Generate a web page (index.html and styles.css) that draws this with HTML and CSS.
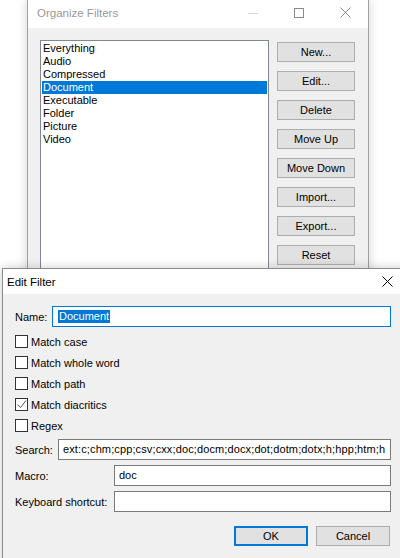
FILE: index.html
```html
<!DOCTYPE html>
<html lang="en">
<head>
    <meta charset="UTF-8">
    <title>Organize Filters</title>
    <link rel="stylesheet" href="styles.css">
</head>
<body>
<div class="desktop">

    <!-- Back window: Organize Filters (inactive) -->
    <div class="window organize">
        <div class="titlebar">
            <span class="title inactive">Organize Filters</span>
            <div class="caption">
                <span class="cap-btn"><svg width="10" height="10" viewBox="0 0 10 10"><path d="M0 5.5h10" stroke="#d8d8d8" stroke-width="1"/></svg></span>
                <span class="cap-btn"><svg width="10" height="10" viewBox="0 0 10 10"><rect x="0.5" y="0.5" width="9" height="9" fill="none" stroke="#8a8a8a" stroke-width="1"/></svg></span>
                <span class="cap-btn"><svg width="11" height="11" viewBox="0 0 11 11"><path d="M0.5 0.5l10 10M10.5 0.5l-10 10" stroke="#8a8a8a" stroke-width="1"/></svg></span>
            </div>
        </div>
        <div class="organize-body">
            <ul class="filter-list">
                <li>Everything</li>
                <li>Audio</li>
                <li>Compressed</li>
                <li class="selected">Document</li>
                <li>Executable</li>
                <li>Folder</li>
                <li>Picture</li>
                <li>Video</li>
            </ul>
            <div class="side-buttons">
                <div class="btn">New...</div>
                <div class="btn">Edit...</div>
                <div class="btn">Delete</div>
                <div class="btn">Move Up</div>
                <div class="btn">Move Down</div>
                <div class="btn">Import...</div>
                <div class="btn">Export...</div>
                <div class="btn">Reset</div>
            </div>
        </div>
    </div>

    <!-- Front window: Edit Filter (active) -->
    <div class="window edit-filter">
        <div class="titlebar">
            <span class="title">Edit Filter</span>
            <div class="caption">
                <span class="cap-btn"><svg width="11" height="11" viewBox="0 0 11 11"><path d="M0.5 0.5l10 10M10.5 0.5l-10 10" stroke="#000" stroke-width="1"/></svg></span>
            </div>
        </div>
        <div class="edit-body">
            <div class="field-row">
                <span class="label name-label">Name:</span>
                <div class="textbox focused"><span class="sel-text">Document</span></div>
            </div>

            <div class="checks">
                <div class="check-row"><span class="checkbox"></span><span>Match case</span></div>
                <div class="check-row"><span class="checkbox"></span><span>Match whole word</span></div>
                <div class="check-row"><span class="checkbox"></span><span>Match path</span></div>
                <div class="check-row">
                    <span class="checkbox"><svg width="11" height="11" viewBox="0 0 11 11"><path d="M1.5 5.5l3 3 5.5-7" fill="none" stroke="#555" stroke-width="1"/></svg></span>
                    <span>Match diacritics</span>
                </div>
                <div class="check-row"><span class="checkbox"></span><span>Regex</span></div>
            </div>

            <div class="field-row search-row">
                <span class="label search-label">Search:</span>
                <div class="textbox search-box">ext:c;chm;cpp;csv;cxx;doc;docm;docx;dot;dotm;dotx;h;hpp;htm;h</div>
            </div>
            <div class="field-row">
                <span class="label wide-label">Macro:</span>
                <div class="textbox">doc</div>
            </div>
            <div class="field-row">
                <span class="label wide-label">Keyboard shortcut:</span>
                <div class="textbox"></div>
            </div>

            <div class="dialog-buttons">
                <div class="btn default">OK</div>
                <div class="btn">Cancel</div>
            </div>
        </div>
    </div>

</div>
</body>
</html>
```
FILE: styles.css
```css
/* General */
body {
    margin: 0;
    background-color: #fff;
    font-family: 'Liberation Sans', Arial, sans-serif;
    font-size: 11px;
    color: #000;
}

.desktop {
    position: relative;
    width: 400px;
    height: 558px;
    overflow: hidden;
}

/* Windows sit on a free canvas */
.window {
    position: absolute;
    box-sizing: border-box;
    background-color: #f0f0f0;
    display: flex;
    flex-direction: column;
}

.titlebar {
    display: flex;
    align-items: center;
    background-color: #fff;
    flex-shrink: 0;
}

.title {
    font-size: 11.5px;
    color: #000;
}

.title.inactive {
    color: #999;
}

.caption {
    display: flex;
    margin-left: auto;
    align-self: stretch;
}

.cap-btn {
    width: 46px;
    display: flex;
    align-items: center;
    justify-content: center;
}

/* Generic push button */
.btn {
    box-sizing: border-box;
    height: 20px;
    background-color: #e1e1e1;
    border: 1px solid #adadad;
    display: flex;
    align-items: center;
    justify-content: center;
}

.btn.default {
    border: 2px solid #0078d7;
}

/* Organize Filters window */
.organize {
    left: 27px;
    top: 0;
    width: 342px;
    height: 330px;
    border: 1px solid #a0a0a0;
    border-top: none;
    box-shadow: 0 0 10px rgba(0, 0, 0, 0.18);
}

.organize .titlebar {
    height: 28px;
}

.organize .title {
    padding-left: 9px;
    padding-bottom: 3px;
}

.organize .caption {
    padding-bottom: 3px;
}

.organize-body {
    display: flex;
    padding: 12px 0 0 12px;
}

.filter-list {
    list-style: none;
    margin: 0;
    padding: 1px;
    width: 229px;
    height: 260px;
    box-sizing: border-box;
    background-color: #fff;
    border: 1px solid #828790;
}

.filter-list li {
    height: 13px;
    line-height: 13px;
    padding-left: 1px;
}

.filter-list li.selected {
    background-color: #0078d7;
    color: #fff;
}

.side-buttons {
    display: flex;
    flex-direction: column;
    gap: 9px;
    margin: 2px 0 0 8px;
    width: 78px;
}

/* Edit Filter dialog */
.edit-filter {
    left: 2px;
    top: 268px;
    width: 409px;
    height: 300px;
    border: 1px solid #8c8c8c;
    box-shadow: 0 0 10px rgba(0, 0, 0, 0.2);
}

.edit-filter .titlebar {
    height: 25px;
}

.edit-filter .title {
    padding-left: 4px;
}

.edit-body {
    padding: 12px 19px 0 12px;
}

.field-row {
    display: flex;
    align-items: center;
    height: 21px;
    margin-bottom: 5px;
}

.label {
    flex-shrink: 0;
}

.name-label { width: 37px; }
.search-label { width: 43px; }
.wide-label { width: 99px; }

.textbox {
    flex: 1;
    box-sizing: border-box;
    height: 21px;
    line-height: 19px;
    padding-left: 4px;
    background-color: #fff;
    border: 1px solid #7a7a7a;
    white-space: nowrap;
    overflow: hidden;
}

.textbox.focused {
    border-color: #0078d7;
}

.search-box {
    letter-spacing: 0.12px;
}

.sel-text {
    display: inline-block;
    margin-left: 1px;
    line-height: 13px;
    padding: 0 1px;
    background-color: #0078d7;
    color: #fff;
}

.checks {
    margin: -1px 0 3px;
}

.check-row {
    display: flex;
    align-items: center;
    gap: 3px;
    height: 21px;
}

.checkbox {
    box-sizing: border-box;
    width: 13px;
    height: 13px;
    border: 1px solid #333;
    background-color: #fff;
    display: flex;
    align-items: center;
    justify-content: center;
}

.dialog-buttons {
    display: flex;
    justify-content: flex-end;
    gap: 8px;
    margin-top: 14px;
    padding-right: 1px;
}

.dialog-buttons .btn {
    width: 74px;
}
```
